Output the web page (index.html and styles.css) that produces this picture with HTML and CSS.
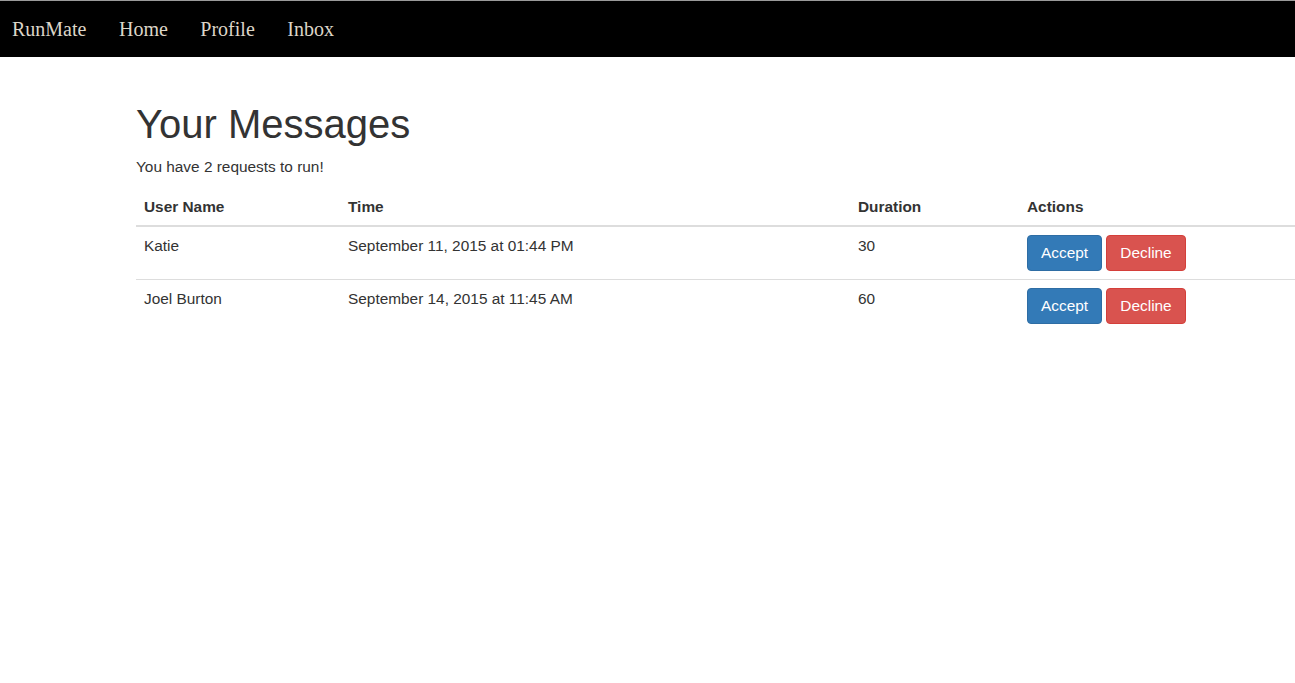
FILE: index.html
```html
<!DOCTYPE html>
<html>
<head>
<meta charset="utf-8">
<link rel="stylesheet" href="styles.css">
</head>
<body>
<nav class="navbar">
  <a class="nav-link brand" href="#">RunMate</a>
  <a class="nav-link" href="#">Home</a>
  <a class="nav-link" href="#">Profile</a>
  <a class="nav-link" href="#">Inbox</a>
</nav>
<main class="content">
  <h1 class="title">Your Messages</h1>
  <p class="intro">You have 2 requests to run!</p>
  <table class="table">
    <thead>
      <tr>
        <th class="col-user">User Name</th>
        <th class="col-time">Time</th>
        <th class="col-dur">Duration</th>
        <th class="col-act">Actions</th>
      </tr>
    </thead>
    <tbody>
      <tr>
        <td>Katie</td>
        <td>September 11, 2015 at 01:44 PM</td>
        <td>30</td>
        <td><button class="btn btn-primary">Accept</button> <button class="btn btn-danger">Decline</button></td>
      </tr>
      <tr>
        <td>Joel Burton</td>
        <td>September 14, 2015 at 11:45 AM</td>
        <td>60</td>
        <td><button class="btn btn-primary">Accept</button> <button class="btn btn-danger">Decline</button></td>
      </tr>
    </tbody>
  </table>
</main>
</body>
</html>
```

FILE: styles.css
```css
html, body {
  margin: 0;
  padding: 0;
}
body {
  font-family: "Liberation Sans", Arial, Helvetica, sans-serif;
  font-size: 15.4px;
  line-height: 22px;
  color: #333;
  background: #fff;
  border-top: 1px solid #9a9a9a;
}
.navbar {
  background: #000;
  height: 56px;
  display: flex;
  align-items: center;
  padding-left: 12px;
  gap: 32.5px;
}
.nav-link {
  font-family: "Liberation Serif", "Times New Roman", serif;
  font-size: 20px;
  color: #dcd5c8;
  text-decoration: none;
  line-height: 1;
}
.content {
  padding-left: 136px;
}
.title {
  font-size: 40px;
  font-weight: 500;
  line-height: 44px;
  margin: 45px 0 9.5px;
}
.intro {
  margin: 0 0 11px;
}
.table {
  border-collapse: collapse;
  border-spacing: 0;
  width: 1200px;
  margin-bottom: 20px;
}
.table th,
.table td {
  padding: 8px;
  text-align: left;
  vertical-align: top;
  line-height: 22px;
}
.table th {
  font-weight: bold;
  vertical-align: bottom;
  padding-top: 7px;
  padding-bottom: 7px;
  border-bottom: 2px solid #ddd;
}
.table tbody tr + tr td {
  border-top: 1px solid #ddd;
}
.col-user { width: 188px; }
.col-time { width: 494px; }
.col-dur { width: 153px; }
.btn {
  display: inline-block;
  font-family: inherit;
  font-size: 15.4px;
  line-height: 22px;
  padding: 6px 13px;
  border: 1px solid transparent;
  border-radius: 4px;
  color: #fff;
  cursor: pointer;
  vertical-align: top;
  margin: 0;
}
.btn-primary {
  background: #337ab7;
  border-color: #2e6da4;
}
.btn-danger {
  background: #d9534f;
  border-color: #d43f3a;
}
```
